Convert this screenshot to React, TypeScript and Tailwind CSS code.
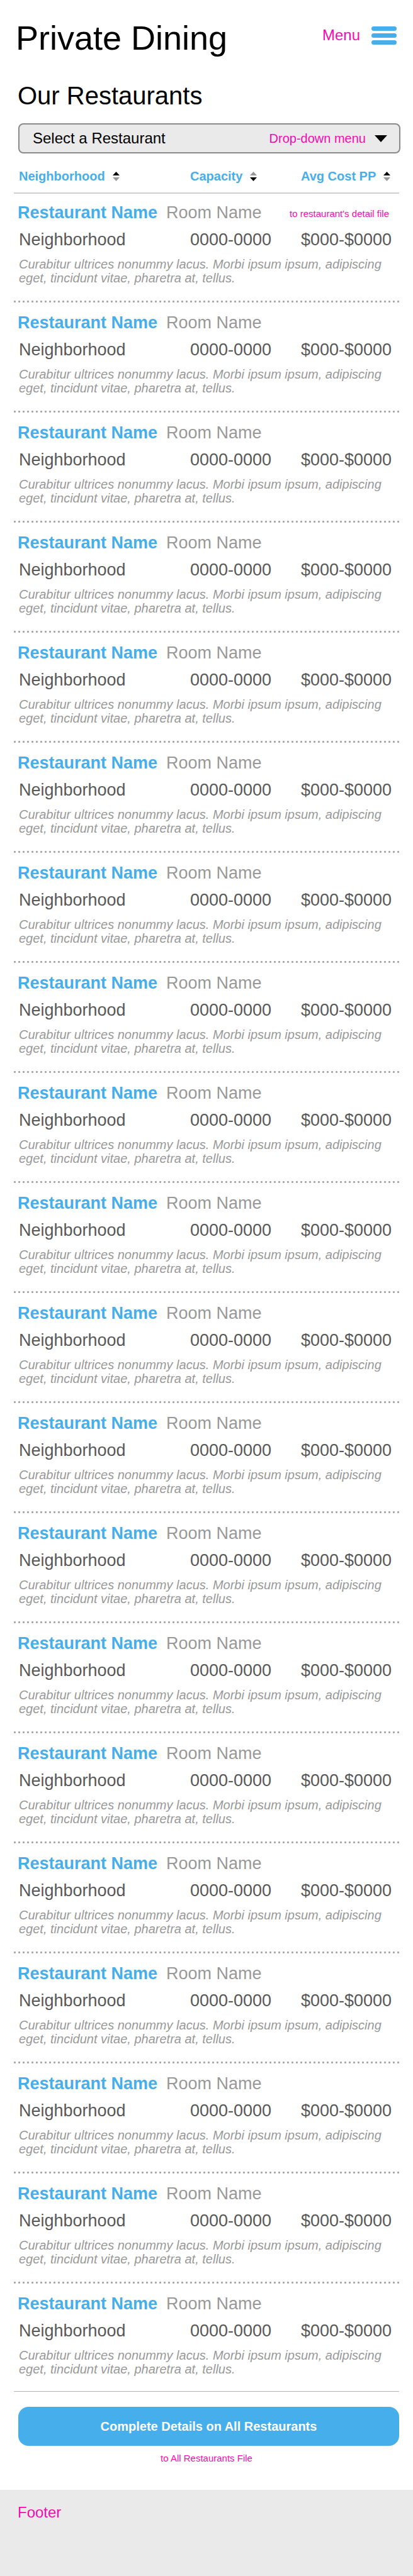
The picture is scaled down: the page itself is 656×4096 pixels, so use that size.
import { useState } from "react";

type Restaurant = {
  name: string;
  room: string;
  neighborhood: string;
  capacity: string;
  cost: string;
  note?: string;
};

const restaurants: Restaurant[] = Array.from({ length: 20 }, (_, i) => ({
  name: "Restaurant Name",
  room: "Room Name",
  neighborhood: "Neighborhood",
  capacity: "0000-0000",
  cost: "$000-$0000",
  note: i === 0 ? "to restaurant's detail file" : undefined,
}));

const description =
  "Curabitur ultrices nonummy lacus. Morbi ipsum ipsum, adipiscing eget, tincidunt vitae, pharetra at, tellus.";

function SortArrows({ direction }: { direction: "up" | "down" }) {
  return (
    <svg aria-hidden="true" className="h-[15px] w-[11px]" viewBox="0 0 11 15">
      <path d="M5.5 0 11 6H0z" fill={direction === "up" ? "#000" : "#999"} />
      <path d="M5.5 15 0 9h11z" fill={direction === "down" ? "#000" : "#999"} />
    </svg>
  );
}

function SortHeader({ label, direction, className }: { label: string; direction: "up" | "down"; className: string }) {
  return (
    <th scope="col" className={className}>
      <button type="button" className="flex items-center gap-3 text-xl leading-6 font-bold whitespace-nowrap text-[#47aeec]">
        {label}
        <SortArrows direction={direction} />
      </button>
    </th>
  );
}

function RestaurantRows({ item, first, last }: { item: Restaurant; first: boolean; last: boolean }) {
  return (
    <tbody className={last ? "border-b border-[#b3b3b3]" : ""}>
      <tr>
        <td colSpan={3} className={first ? "pt-[14px] pl-1.5" : "pt-4 pl-1.5"}>
          <div className="flex items-center justify-between pr-4">
            <p className="text-[27px] leading-8 text-[#999]">
              <a href="#detail" className="mr-[14px] font-bold text-[#47aeec]">{item.name}</a>
              {item.room}
            </p>
            {item.note && <span className="pt-1 text-[15px] leading-5 text-[#f60bb0]">{item.note}</span>}
          </div>
        </td>
      </tr>
      <tr className="text-[27px] leading-8 text-[#595959]">
        <td className="pt-[11px] pl-2">{item.neighborhood}</td>
        <td className="pt-[11px]">{item.capacity}</td>
        <td className="pt-[11px]">{item.cost}</td>
      </tr>
      <tr>
        <td colSpan={3} className={last ? "pt-3 pb-6" : "pt-3"}>
          <p className="pl-2 text-xl leading-[22px] text-[#999] italic">{description}</p>
          {!last && (
            <div className="mt-[25px] -ml-0.5 h-[3px] bg-[radial-gradient(circle,#a6a6a6_1.2px,transparent_2px)] bg-[length:7px_3px] bg-left bg-repeat-x" />
          )}
        </td>
      </tr>
    </tbody>
  );
}

export default function App() {
  const [choice, setChoice] = useState("");

  return (
    <div className="flex min-h-screen flex-col bg-white font-['Liberation_Sans',Arial,sans-serif] text-black">
      <header className="flex items-start justify-between pt-7 pr-[26px] pl-[25px]">
        <h1 className="text-[54px] leading-[64px]">Private Dining</h1>
        <button type="button" className="mt-3 flex items-center gap-[18px] text-2xl leading-8 text-[#f60bb0]">
          Menu
          <svg aria-hidden="true" className="h-[29px] w-10" viewBox="0 0 40 29" fill="#47aeec">
            <rect width="40" height="7" rx="3.5" />
            <rect y="11" width="40" height="7" rx="3.5" />
            <rect y="22" width="40" height="7" rx="3.5" />
          </svg>
        </button>
      </header>

      <main className="px-[22px]">
        <h2 className="mt-9 pl-1.5 text-[40px] leading-[48px]">Our Restaurants</h2>

        <div className="mt-5 mr-[-2px] ml-[7px] grid items-center">
          <select
            id="restaurant"
            value={choice}
            onChange={(e) => setChoice(e.target.value)}
            className="col-start-1 row-start-1 h-12 w-full appearance-none rounded-lg border-2 border-[#8a8a8a] bg-[#eaeaea] pl-[21px] text-2xl text-black"
          >
            <option value="">Select a Restaurant</option>
            <option value="1">Restaurant Name</option>
          </select>
          <label
            htmlFor="restaurant"
            className="pointer-events-none col-start-1 row-start-1 flex items-center gap-[14px] justify-self-end pr-[21px] text-xl text-[#f60bb0]"
          >
            Drop-down menu
            <svg aria-hidden="true" className="h-[11px] w-5" viewBox="0 0 20 11">
              <path d="M0 0h20L10 11z" fill="#000" />
            </svg>
          </label>
        </div>

        <table className="mt-6 w-full table-fixed border-collapse text-left">
          <colgroup>
            <col />
            <col className="w-44" />
            <col className="w-[156px]" />
          </colgroup>
          <thead className="border-b-2 border-[#d0d0d0]">
            <tr>
              <SortHeader label="Neighborhood" direction="up" className="pb-[14px] pl-2" />
              <SortHeader label="Capacity" direction="down" className="pb-[14px]" />
              <SortHeader label="Avg Cost PP" direction="up" className="pb-[14px]" />
            </tr>
          </thead>
          {restaurants.map((item, i) => (
            <RestaurantRows key={i} item={item} first={i === 0} last={i === restaurants.length - 1} />
          ))}
        </table>

        <div className="mt-6 ml-[7px] flex flex-col items-center">
          <button type="button" className="h-[62px] w-full rounded-2xl bg-[#47aeec] text-xl font-bold text-white">
            Complete Details on All Restaurants
          </button>
          <a href="#all" className="mt-[10px] mr-[7px] text-[15px] leading-5 text-[#f60bb0]">to All Restaurants File</a>
        </div>
      </main>

      <footer className="mt-10 flex-1 bg-[#eaeaea] px-7 pt-5 pb-20 text-2xl leading-8 text-[#f60bb0]">Footer</footer>
    </div>
  );
}
